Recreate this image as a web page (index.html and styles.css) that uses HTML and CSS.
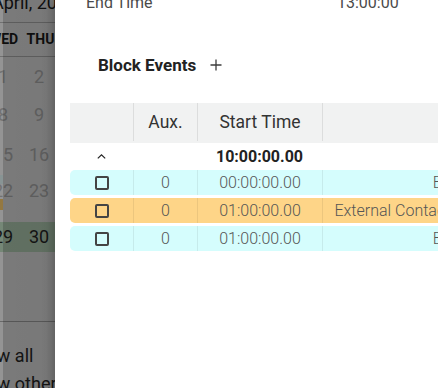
FILE: index.html
```html
<!DOCTYPE html>
<html lang="en">
<head>
<meta charset="utf-8">
<title>Block Events</title>
<link rel="stylesheet" href="styles.css">
</head>
<body>
<div class="screen">
  <div class="backdrop">
    <div class="calendar">
      <div class="cal-title">April, 2024</div>
      <div class="cal-weekdays">
        <span>SUN</span><span>MON</span><span>TUE</span><span>WED</span><span>THU</span><span>FRI</span><span>SAT</span>
      </div>
      <div class="cal-week w1">
        <div class="day"></div><div class="day">&nbsp;</div><div class="day"></div><div class="day">1</div><div class="day">2</div><div class="day">3</div><div class="day">4</div>
      </div>
      <div class="cal-week w2">
        <div class="day">6</div><div class="day">7</div><div class="day">7</div><div class="day">8</div><div class="day">9</div><div class="day">10</div><div class="day">11</div>
      </div>
      <div class="cal-week w3">
        <div class="day">13</div><div class="day">14</div><div class="day">14</div><div class="day">15<i class="chip chip-cyan"></i></div><div class="day">16</div><div class="day">17</div><div class="day">18</div>
      </div>
      <div class="cal-week w4">
        <div class="day">20</div><div class="day">21</div><div class="day">21</div><div class="day">22<i class="chip chip-orange"></i></div><div class="day">23</div><div class="day">24</div><div class="day">25</div>
      </div>
      <div class="cal-week w5 current">
        <div class="day">27</div><div class="day">28</div><div class="day">28</div><div class="day">29</div><div class="day">30</div><div class="day"></div><div class="day"></div>
      </div>
      <div class="cal-footer">
        <div>Show all</div>
        <div>Show others</div>
      </div>
    </div>
    <div class="scrim"></div>
  </div>

  <div class="panel">
    <div class="detail-row">
      <span class="detail-label">End Time</span>
      <span class="detail-value">13:00:00</span>
    </div>

    <div class="section-head">
      <span class="section-title">Block Events</span>
      <svg class="add-icon" width="12" height="12" viewBox="0 0 12 12" aria-hidden="true"><path d="M6 0.5V11.5M0.5 6H11.5" stroke="#3c3c3c" stroke-width="1.3" fill="none"/></svg>
    </div>

    <div class="events-table">
      <div class="t-row t-head">
        <div class="t-cell"></div>
        <div class="t-cell">Aux.</div>
        <div class="t-cell">Start Time</div>
        <div class="t-cell"></div>
      </div>
      <div class="t-row t-group">
        <div class="t-cell">
          <svg width="9" height="5" viewBox="0 0 9 5" aria-hidden="true"><path d="M0.8 4.4L4.5 0.9L8.2 4.4" stroke="#222" stroke-width="1.2" fill="none"/></svg>
        </div>
        <div class="t-cell"></div>
        <div class="t-cell group-time">10:00:00.00</div>
        <div class="t-cell"></div>
      </div>
      <div class="t-row t-data row-cyan">
        <div class="t-cell"><span class="checkbox"></span></div>
        <div class="t-cell">0</div>
        <div class="t-cell">00:00:00.00</div>
        <div class="t-cell">Break</div>
      </div>
      <div class="t-row t-data row-orange">
        <div class="t-cell"><span class="checkbox"></span></div>
        <div class="t-cell">0</div>
        <div class="t-cell">01:00:00.00</div>
        <div class="t-cell">External Contact Availability Block</div>
      </div>
      <div class="t-row t-data row-cyan">
        <div class="t-cell"><span class="checkbox"></span></div>
        <div class="t-cell">0</div>
        <div class="t-cell">01:00:00.00</div>
        <div class="t-cell">Break</div>
      </div>
    </div>
  </div>
</div>
</body>
</html>
```
FILE: styles.css
```css
* { box-sizing: border-box; }

html, body {
  margin: 0;
  padding: 0;
  background: #ffffff;
}

body {
  font-family: Roboto, "Noto Sans", "Liberation Sans", sans-serif;
}

.screen {
  display: flex;
  width: 438px;
  height: 388px;
  overflow: hidden;
}

/* ---------- dimmed calendar behind the drawer ---------- */
.backdrop {
  position: relative;
  width: 55px;
  flex: none;
  overflow: hidden;
  background: #ffffff;
}

.calendar {
  width: 252px;
  margin-left: -123px;
  margin-top: -5px;
  color: #222;
}

.cal-title {
  height: 28px;
  padding-left: 115px;
  font-size: 18px;
  line-height: 16px;
  border-bottom: 1px solid #c2c2c2;
}

.cal-weekdays {
  display: grid;
  grid-template-columns: repeat(7, 36px);
  height: 34px;
  border-bottom: 1px solid #c2c2c2;
}

.cal-weekdays span {
  text-align: center;
  font-size: 14px;
  font-weight: 700;
  line-height: 33px;
  color: #1e1e1e;
}

.cal-weekdays span:nth-child(4) {
  padding-left: 1px;
}

.cal-weekdays span:nth-child(5) {
  padding-left: 3px;
}

.cal-week {
  display: grid;
  grid-template-columns: repeat(7, 36px);
}

.day {
  text-align: center;
  font-size: 18px;
  line-height: 16px;
  color: #c4c4c4;
}

.w1 { height: 40px; padding-top: 12px; }
.w2 { height: 38px; padding-top: 10px; }
.w3 { height: 48px; padding-top: 12px; }
.w4 { height: 39px; padding-top: 0; }
.w5 { height: 30px; padding-top: 7px; }

.current { background: #cae9cc; }
.current .day { color: #2a2a2a; }

.chip {
  display: block;
  width: 18px;
  height: 9px;
}
.w3 .chip { margin-top: 12px; }
.w4 .chip { margin-top: 0; height: 11px; }
.chip-cyan { background: #eaffff; }
.chip-orange { background: #ffcf70; }

.cal-footer {
  margin-top: 69px;
  border-top: 1px solid #b5b5b5;
  padding-top: 20px;
  padding-left: 89px;
  font-size: 18px;
  line-height: 28px;
  color: #2a2a2a;
}

.scrim {
  position: absolute;
  inset: 0;
  background: linear-gradient(to right,
    rgba(0, 0, 0, 0.42) 0,
    rgba(0, 0, 0, 0.42) 3px,
    rgba(0, 0, 0, 0.52) 3px,
    rgba(0, 0, 0, 0.53) 100%);
}

/* ---------- drawer panel ---------- */
.panel {
  position: relative;
  z-index: 1;
  flex: 1;
  min-width: 0;
  overflow: hidden;
  background: #ffffff;
  box-shadow: -3px 0 9px rgba(0, 0, 0, 0.22);
}

.detail-row {
  display: flex;
  margin-top: -9px;
  padding-left: 31px;
  font-size: 16px;
  line-height: 24px;
  color: #4a4a4a;
}

.detail-label {
  width: 251px;
  flex: none;
}

.section-head {
  display: flex;
  align-items: center;
  margin-top: 38px;
  padding-left: 43px;
  height: 24px;
}

.section-title {
  font-size: 17px;
  font-weight: 700;
  color: #222;
}

.add-icon {
  margin-left: 14px;
  flex: none;
}

/* ---------- events table ---------- */
.events-table {
  margin-top: 26px;
  margin-left: 15px;
  width: 512px;
}

.t-row {
  display: grid;
  grid-template-columns: 63px 64px 125px 260px;
}

.t-cell {
  display: flex;
  align-items: center;
  justify-content: center;
  white-space: nowrap;
  overflow: hidden;
}

.t-head {
  height: 40px;
  padding-bottom: 2px;
  background: #f1f2f2;
  font-size: 17.5px;
  color: #333;
}

.t-head .t-cell + .t-cell {
  border-left: 1px solid #dcdddd;
}

.t-group {
  height: 27px;
  font-size: 16px;
  color: #222;
}

.group-time {
  font-weight: 700;
}

.t-data {
  height: 25px;
  margin-top: 3px;
  border-radius: 5px;
  font-size: 16px;
  font-weight: 300;
  color: #555;
}

.t-group + .t-data { margin-top: 0; }

.t-data .t-cell + .t-cell {
  border-left: 1px solid rgba(0, 0, 0, 0.07);
}

.row-cyan { background: #d5fdfd; }
.row-orange { background: #fed588; }

.checkbox {
  display: block;
  width: 14px;
  height: 14px;
  border: 2px solid #444;
  border-radius: 2px;
}
```
